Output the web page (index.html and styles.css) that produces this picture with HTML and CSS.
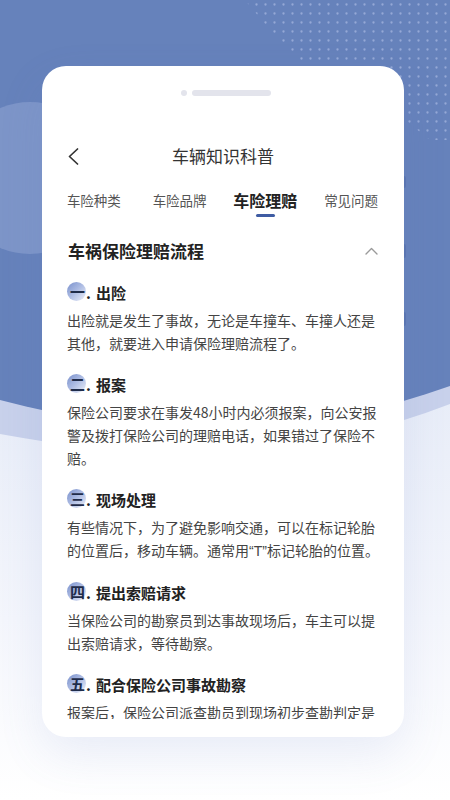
FILE: index.html
```html
<!DOCTYPE html>
<html lang="zh-CN">
<head>
<meta charset="utf-8">
<title>车辆知识科普</title>
<link rel="stylesheet" href="styles.css">
</head>
<body>
<div class="stage">
  <svg class="bg" viewBox="0 0 450 800" width="450" height="800" aria-hidden="true">
    <defs>
      <linearGradient id="lg" gradientUnits="userSpaceOnUse" x1="0" y1="400" x2="0" y2="800">
        <stop offset="0" stop-color="#e8edf8"/>
        <stop offset="0.55" stop-color="#f4f6fc"/>
        <stop offset="1" stop-color="#ffffff"/>
      </linearGradient>
      <pattern id="dots" width="9" height="9" patternUnits="userSpaceOnUse">
        <circle cx="4.5" cy="4.5" r="1.15" fill="#95a8d6"/>
      </pattern>
      <clipPath id="dclip">
        <polygon points="245,0 450,0 450,140 430,140 380,100 300,60 270,30"/>
      </clipPath>
    </defs>
    <rect width="450" height="800" fill="url(#lg)"/>
    <path fill="#c8d1eb" d="M0,0 H450 V404 C300,462 150,462 0,434 Z"/>
    <path fill="#6682bb" d="M0,0 H450 V386 C300,440 150,440 0,400 Z"/>
    <circle cx="30" cy="178" r="76" fill="#7d95c8"/>
    <rect width="450" height="150" fill="url(#dots)" clip-path="url(#dclip)"/>
  </svg>

  <span class="side-btn b1"></span>
  <span class="side-btn b2"></span>
  <span class="side-btn b3"></span>

  <main class="card">
    <div class="notch"><span class="cam"></span><span class="speaker"></span></div>

    <header class="nav">
      <svg class="back" viewBox="0 0 11 17" aria-hidden="true">
        <polyline points="9.5,1 1.5,8.5 9.5,16" fill="none" stroke="#333" stroke-width="1.7" stroke-linecap="round" stroke-linejoin="round"/>
      </svg>
      <h1 class="title">车辆知识科普</h1>
      <span></span>
    </header>

    <nav class="tabs">
      <div class="tab">车险种类</div>
      <div class="tab">车险品牌</div>
      <div class="tab active">车险理赔<i class="bar"></i></div>
      <div class="tab">常见问题</div>
    </nav>

    <div class="section-head">
      <h2 class="section-title">车祸保险理赔流程</h2>
      <svg class="caret" viewBox="0 0 13 8" aria-hidden="true">
        <polyline points="1,7 6.5,1.5 12,7" fill="none" stroke="#9a9a9a" stroke-width="1.4" stroke-linecap="round" stroke-linejoin="round"/>
      </svg>
    </div>

    <div class="content">
      <section class="item">
        <div class="item-head"><span class="num">一</span><span class="dot">.</span><span>出险</span></div>
        <p>出险就是发生了事故，无论是车撞车、车撞人还是其他，就要进入申请保险理赔流程了。</p>
      </section>
      <section class="item">
        <div class="item-head"><span class="num">二</span><span class="dot">.</span><span>报案</span></div>
        <p>保险公司要求在事发48小时内必须报案，向公安报警及拨打保险公司的理赔电话，如果错过了保险不赔。</p>
      </section>
      <section class="item">
        <div class="item-head"><span class="num">三</span><span class="dot">.</span><span>现场处理</span></div>
        <p>有些情况下，为了避免影响交通，可以在标记轮胎的位置后，移动车辆。通常用<span class="latin">“T”</span>标记轮胎的位置。</p>
      </section>
      <section class="item">
        <div class="item-head"><span class="num">四</span><span class="dot">.</span><span>提出索赔请求</span></div>
        <p>当保险公司的勘察员到达事故现场后，车主可以提出索赔请求，等待勘察。</p>
      </section>
      <section class="item">
        <div class="item-head"><span class="num">五</span><span class="dot">.</span><span>配合保险公司事故勘察</span></div>
        <p>报案后，保险公司派查勘员到现场初步查勘判定是否属于保险责任，并确定损失情况。</p>
      </section>
    </div>
  </main>
</div>
</body>
</html>
```

FILE: styles.css
```css
html, body {
  margin: 0;
  padding: 0;
}

body {
  width: 450px;
  height: 800px;
  overflow: hidden;
  background: #ffffff;
  font-family: "Noto Sans CJK SC", "Noto Sans", sans-serif;
}

.stage {
  position: relative;
  width: 450px;
  height: 800px;
  padding-top: 66px;
  box-sizing: border-box;
}

.bg {
  position: absolute;
  left: 0;
  top: 0;
  width: 450px;
  height: 800px;
  z-index: 0;
  display: block;
}

.side-btn {
  position: absolute;
  left: 403px;
  width: 3px;
  background: #5a75b1;
  border-radius: 0 2px 2px 0;
  z-index: 0;
}
.side-btn.b1 { top: 176px; height: 12px; }
.side-btn.b2 { top: 244px; height: 14px; }
.side-btn.b3 { top: 312px; height: 14px; }

.card {
  position: relative;
  z-index: 1;
  margin-left: 42px;
  width: 362px;
  height: 671px;
  background: #ffffff;
  border-radius: 24px;
  box-shadow: 0 18px 46px rgba(96, 126, 196, 0.12);
  display: flex;
  flex-direction: column;
  padding: 24px 0 18px;
  box-sizing: border-box;
  overflow: hidden;
}

.notch {
  display: flex;
  justify-content: center;
  align-items: center;
  gap: 5px;
  height: 6px;
  padding-left: 6px;
}
.cam {
  width: 6px;
  height: 6px;
  border-radius: 50%;
  background: #e3e4ec;
}
.speaker {
  width: 79px;
  height: 6px;
  border-radius: 3px;
  background: #e3e4ec;
}

.nav {
  display: grid;
  grid-template-columns: 1fr auto 1fr;
  align-items: center;
  height: 40px;
  margin-top: 40px;
  padding: 0 26px;
}
.back {
  width: 11px;
  height: 17px;
  display: block;
}
.title {
  margin: 0;
  font-size: 17px;
  font-weight: 400;
  line-height: 24px;
  color: #333333;
}

.tabs {
  display: grid;
  grid-template-columns: repeat(4, 1fr);
  align-items: start;
  margin-top: 12px;
  padding: 0 10px 0 9px;
}
.tab {
  display: flex;
  flex-direction: column;
  align-items: center;
  font-size: 13.5px;
  line-height: 24px;
  color: #555555;
}
.tab.active {
  font-size: 16px;
  font-weight: 700;
  color: #222222;
}
.bar {
  display: block;
  width: 19px;
  height: 3px;
  margin-top: 2px;
  border-radius: 2px;
  background: #3f5ca3;
}

.section-head {
  display: flex;
  justify-content: space-between;
  align-items: center;
  height: 24px;
  margin-top: 22px;
  padding: 0 26px;
}
.section-title {
  margin: 0;
  font-size: 17px;
  font-weight: 700;
  line-height: 24px;
  color: #222222;
}
.caret {
  width: 13px;
  height: 8px;
  display: block;
}

.content {
  flex: 1;
  min-height: 0;
  overflow: hidden;
  margin-top: 17px;
  padding: 0 21px 0 25px;
}

.item {
  margin-bottom: 17px;
}
.item-head {
  display: flex;
  align-items: center;
  height: 24px;
  margin-bottom: 5px;
  font-size: 15px;
  font-weight: 700;
  color: #222222;
}
.num {
  position: relative;
  z-index: 0;
  padding-left: 3px;
  color: #1f2c4a;
  line-height: 24px;
}
.num::before {
  content: "";
  position: absolute;
  left: 0;
  top: 50%;
  width: 19px;
  height: 19px;
  margin-top: -10px;
  border-radius: 50%;
  background: linear-gradient(135deg, #7990cc 0%, #adbce3 48%, #eef1fa 100%);
  z-index: -1;
}
.dot {
  margin-left: 1px;
  margin-right: 5px;
}
.item p {
  margin: 0;
  font-size: 14px;
  line-height: 23px;
  color: #444444;
}
.latin {
  font-family: "Liberation Sans", Arial, sans-serif;
}
```
